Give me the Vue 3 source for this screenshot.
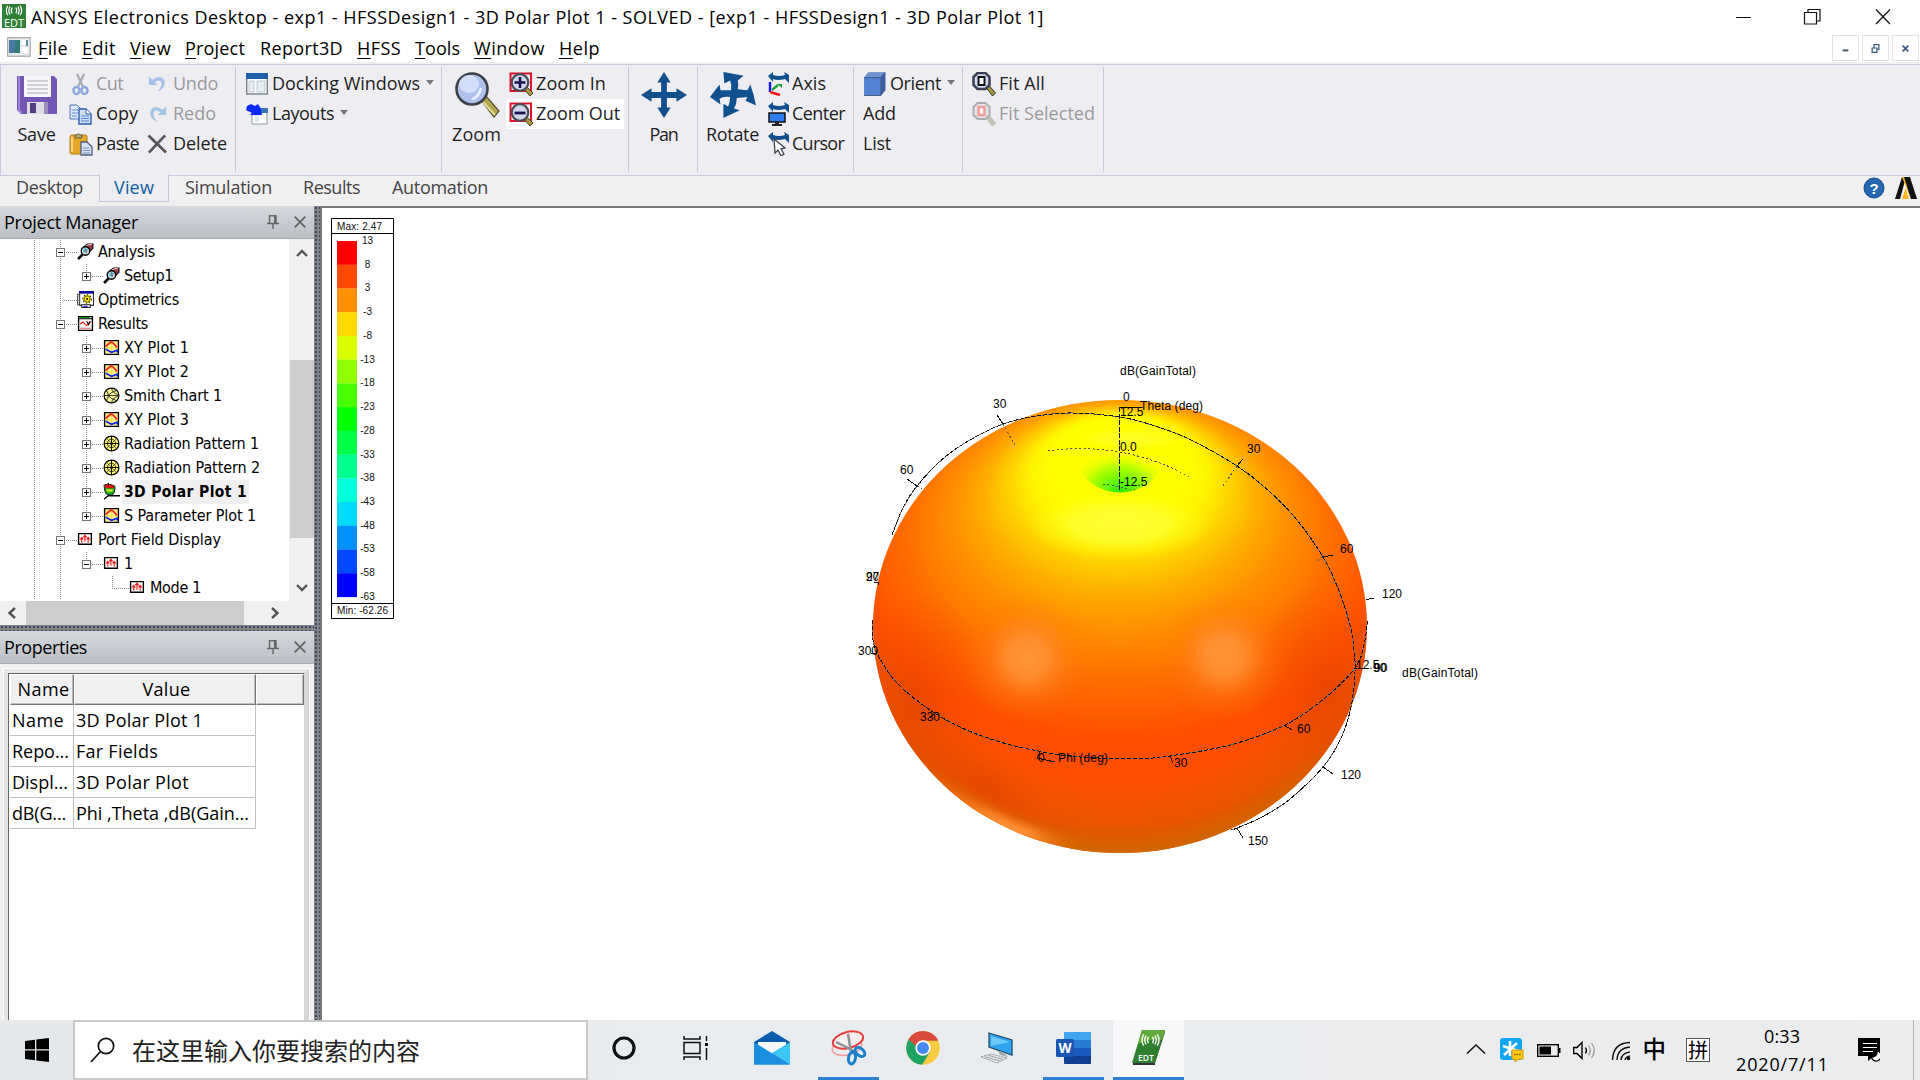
<script setup>
// Spreads a label's letters so that it takes the given width in pixels
const fit = (el, { value }) => {
  if (!value) return
  el.style.letterSpacing = '0px'
  const n = el.textContent.length
  el.style.letterSpacing = (value - el.getBoundingClientRect().width) / n + 'px'
}
const vFit = { mounted: fit }

const menus = [
  ['F', 'ile', 30, 14], ['E', 'dit', 34, 14], ['V', 'iew', 41, 14], ['P', 'roject', 60, 15],
  ['', 'Report3D', 83, 14], ['H', 'FSS', 44, 14], ['T', 'ools', 45, 14], ['W', 'indow', 71, 14], ['H', 'elp', 41, 0],
]

const groups = [
  { w: 235, cols: [
    { big: true, w: 67, icon: 'save', size: 42, label: 'Save', fit: 38, shift: 4 },
    { w: 79, pad: 1, iw: 24, gap: 3, items: [
      { icon: 'cut', label: 'Cut', fit: 27, off: true }, { icon: 'copy', label: 'Copy', fit: 42 }, { icon: 'paste', label: 'Paste', fit: 43 }] },
    { w: 88, pad: 0, iw: 21, gap: 5, items: [
      { icon: 'undo', label: 'Undo', fit: 45, off: true }, { icon: 'redo', label: 'Redo', fit: 43, off: true }, { icon: 'del', label: 'Delete', fit: 54 }] },
  ] },
  { w: 206, cols: [{ w: 205, pad: 10, iw: 22, gap: 4, items: [
    { icon: 'dock', label: 'Docking Windows', fit: 148, arrow: true }, { icon: 'layout', label: 'Layouts', fit: 62, arrow: true }] }] },
  { w: 187, cols: [
    { big: true, w: 64, icon: 'zoom', size: 46, label: 'Zoom', fit: 49, shift: 5 },
    { w: 118, pad: 2, iw: 26, gap: 2, items: [
      { icon: 'zin', label: 'Zoom In', fit: 70 }, { icon: 'zout', label: 'Zoom Out', fit: 84, hot: true }] },
  ] },
  { w: 69, cols: [{ big: true, w: 68, icon: 'pan', size: 48, label: 'Pan', fit: 28, shift: 1 }] },
  { w: 156, cols: [
    { big: true, w: 69, icon: 'rotate', size: 48, label: 'Rotate', fit: 53, shift: 0 },
    { w: 85, pad: 0, iw: 22, gap: 3, items: [
      { icon: 'axis', label: 'Axis', fit: 34 }, { icon: 'center', label: 'Center', fit: 53 }, { icon: 'cursor', label: 'Cursor', fit: 52 }] },
  ] },
  { w: 109, cols: [{ w: 108, pad: 9, iw: 23, gap: 4, items: [
    { icon: 'cube', label: 'Orient', fit: 51, arrow: true }, { label: 'Add', fit: 33 }, { label: 'List', fit: 28 }] }] },
  { w: 141, cols: [{ w: 138, pad: 8, iw: 25, gap: 3, items: [
    { icon: 'fit', label: 'Fit All', fit: 46 }, { icon: 'fitsel', label: 'Fit Selected', fit: 96, off: true }] }] },
]

const tabs = [['Desktop', 67, 16, 16], ['View', 40, 14, 14], ['Simulation', 87, 16, 16], ['Results', 57, 15, 16], ['Automation', 96, 16, 16]]

// g: guide cells left of the icon; l line, + / - boxes, tee stub
const tree = [
  { g: ['l', '-'], icon: 'setup', t: 'Analysis', w: 57 },
  { g: ['l', 'l', '+ last'], icon: 'setup', t: 'Setup1', w: 49 },
  { g: ['l', 'tee'], icon: 'opti', t: 'Optimetrics', w: 81 },
  { g: ['l', '-'], icon: 'results', t: 'Results', w: 50 },
  { g: ['l', 'l', '+'], icon: 'xy', t: 'XY Plot 1', w: 65 },
  { g: ['l', 'l', '+'], icon: 'xy', t: 'XY Plot 2', w: 65 },
  { g: ['l', 'l', '+'], icon: 'smith', t: 'Smith Chart 1', w: 98 },
  { g: ['l', 'l', '+'], icon: 'xy', t: 'XY Plot 3', w: 65 },
  { g: ['l', 'l', '+'], icon: 'rad', t: 'Radiation Pattern 1', w: 135 },
  { g: ['l', 'l', '+'], icon: 'rad', t: 'Radiation Pattern 2', w: 136 },
  { g: ['l', 'l', '+'], icon: 'polar', t: '3D Polar Plot 1', w: 123, sel: true },
  { g: ['l', 'l', '+ last'], icon: 'xy', t: 'S Parameter Plot 1', w: 132 },
  { g: ['l', '-'], icon: 'port', t: 'Port Field Display', w: 123 },
  { g: ['l', 'l', '- last'], icon: 'port', t: '1', w: 0 },
  { g: ['l', 'l', '', 'tee last'], icon: 'port', t: 'Mode 1', w: 51 },
]

const props = [['Name', 52, '3D Polar Plot 1', 127], ['Repo...', 57, 'Far Fields', 82], ['Displ...', 56, '3D Polar Plot', 113], ['dB(G...', 54, 'Phi ,Theta ,dB(Gain...', 173]]

const scale = ['#ff0000', '#ff4800', '#ff9100', '#ffda00', '#daff00', '#91ff00', '#48ff00', '#00ff00', '#00ff48', '#00ff91', '#00ffda', '#00daff', '#0091ff', '#0048ff', '#0000ff']
const ticks = [13, 8, 3, -3, -8, -13, -18, -23, -28, -33, -38, -43, -48, -53, -58, -63]

// Catmull-Rom spline through the points
function smooth(p) {
  let d = `M${p[0]}`
  for (let i = 0; i < p.length - 1; i++) {
    const a = p[i - 1] || p[i], b = p[i], c = p[i + 1], e = p[i + 2] || c
    d += `C${b[0] + (c[0] - a[0]) / 6},${b[1] + (c[1] - a[1]) / 6} ${c[0] - (e[0] - b[0]) / 6},${c[1] - (e[1] - b[1]) / 6} ${c[0]},${c[1]}`
  }
  return d
}
const theta = smooth([[892, 535], [903, 508], [917, 486], [942, 459.500], [970, 440], [1003, 424], [1037, 416], [1073, 413], [1120, 417], [1155, 426], [1190, 439.5], [1237, 466], [1270, 492], [1297, 520], [1323, 557], [1339, 591], [1350, 625], [1354, 650], [1355, 672], [1351, 707], [1341, 738], [1323, 767], [1290, 799], [1262, 817], [1237, 828], [1231, 830]])
const phi = smooth([[873, 620], [873, 640], [879, 657], [897, 683], [927, 708], [960, 727], [1000, 742], [1043, 752], [1080, 757], [1120, 758.5], [1147, 758.3], [1170, 756], [1230, 745], [1285, 725], [1325, 698], [1355, 668], [1364, 645], [1367.5, 621]])
const inner = smooth([[1048, 451], [1080, 448.5], [1120, 452], [1160, 463], [1190, 477]])

const labels = [
  [1120, 375, 'dB(GainTotal)', 76], [1123, 401, '0'], [1140, 410, 'Theta (deg)', 63], [1120, 416, '12.5'], [1120, 451, '0.0'], [1120, 486, '-12.5'],
  [993, 408, '30'], [900, 474, '60'], [1247, 453, '30'], [1340, 553, '60'], [1382, 598, '120'], [858, 655, '300'],
  [920, 721, '330'], [1038, 762, '0'], [1058, 762, 'Phi (deg)', 50], [1174, 767, '30'], [1297, 733, '60'], [1356, 669, '12.5'], [1373, 672, '90'], [1374, 672, '90'],
  [1402, 677, 'dB(GainTotal)', 76], [1341, 779, '120'], [1248, 845, '150'],
]
</script>

<template>
  <svg width="0" height="0" class="defs">
    <symbol id="save" viewBox="0 0 42 42"><path d="M3 2H38L41 5V40H5L1 36V2Z" fill="#7457b5" /><path d="M3 2V36L6 39" stroke="#9d86d2" fill="none" stroke-width="2" /><path d="M8 2H35V23H8Z" fill="#f6f6f8" /><path d="M11 7H32M11 11H32M11 15H32M11 19H32" stroke="#c3c3c8" stroke-width="1.3" /><path d="M11 28H32V40H11Z" fill="#dcdce2" /><path d="M14 29H20V39H14Z" fill="#524080" /><path d="M28 28H32V40H28Z" fill="#9a8cc0" /></symbol>
    <symbol id="cut" viewBox="0 0 24 24"><path d="M8 2L14 15M15 2L9 15" stroke="#a9adb5" stroke-width="2.4" /><g fill="none" stroke="#8fa9de" stroke-width="2.6"><ellipse cx="7.5" cy="18.5" rx="3" ry="3.5" /><ellipse cx="15.5" cy="18.5" rx="3" ry="3.5" /></g></symbol>
    <symbol id="copy" viewBox="0 0 24 24"><path d="M1 3H8L12 7V17H1Z" fill="#dce9fb" stroke="#4a76b8" /><path d="M3 8H9M3 11H9M3 14H8" stroke="#5d8ed0" /><path d="M10 7H17L22 12V22H10Z" fill="#cfe0f8" stroke="#2b5fae" stroke-width="1.4" /><path d="M17 7V12H22" fill="#fff" stroke="#2b5fae" /><path d="M12 14H20M12 16.500H20M12 19H20" stroke="#4f84cf" /></symbol>
    <symbol id="paste" viewBox="0 0 24 24"><rect x="1" y="3" width="17" height="19" rx="1.500" fill="#e6a82a" stroke="#b47f14" /><path d="M3 5V20" stroke="#ffd778" stroke-width="2" /><path d="M6 6V3H8Q9.500 0 11 3H13V6Z" fill="#b8a877" stroke="#6c5f38" /><path d="M12 10H18L23 15V23H12Z" fill="#d6e2f2" stroke="#4c5f80" stroke-width="1.3" /><path d="M14 16H20M14 18.500H21M14 21H21" stroke="#7d95ba" /></symbol>
    <symbol id="undo" viewBox="0 0 22 22"><path d="M2 3V12H11L8 9.500Q13 5.500 15 9Q16.500 13 11 19Q20 15 18.500 8Q15 0 5.500 6.500Z" fill="#a9c0ea" /></symbol>
    <symbol id="redo" viewBox="0 0 22 22"><path d="M20 3V12H11L14 9.500Q9 5.500 7 9Q5.500 13 11 20Q2 15 3.500 8Q7 0 16.500 6.500Z" fill="#a4c4e4" /></symbol>
    <symbol id="del" viewBox="0 0 22 22"><path d="M1.500 2L20 20M19 2L2 20" stroke="#55585c" stroke-width="2.900" /></symbol>
    <symbol id="dock" viewBox="0 0 22 22"><rect x=".7" y="1" width="20.600" height="20" fill="#fff" stroke="#777f88" stroke-width="1.400" /><path d="M0 0H22V6H0Z" fill="#1c62a8" /><path d="M3 8H8V19H3ZM11 8H19V19H11Z" fill="#e6eef3" stroke="#a7b8c0" stroke-width=".7" /></symbol>
    <symbol id="layout" viewBox="0 0 22 22"><path d="M8 6H21V21H6V10Z" fill="#fff" stroke="#8a9aa5" /><path d="M8 5H22V10H8Z" fill="#3776b4" /><path d="M9 12H13V19H9Z" fill="#dce8ef" /><path d="M1 3L5 1L9 3L12 1L15 6L16 12H4L6 10L0 7Z" fill="#0a28ff" /></symbol>
    <symbol id="zoom" viewBox="0 0 46 46"><path d="M27 28L32 24L45 39L40 45Z" fill="#b1a64b" stroke="#555033" stroke-width="1.200" /><path d="M29 30L41 43" stroke="#e1dc94" stroke-width="2" /><ellipse cx="18" cy="17" rx="15.500" ry="15.500" fill="#afc2ed" stroke="#3c4048" stroke-width="2.600" /><ellipse cx="15" cy="12" rx="10" ry="9" fill="#dce6fb" opacity=".8" /><path d="M27 16Q25 25 18 27" stroke="#e9f2ff" stroke-width="2.500" fill="none" /></symbol>
    <symbol id="mag" viewBox="0 0 24 24"><path d="M1.500 1.500H22V19H1.500Z" fill="none" stroke="#e0112b" stroke-width="2" /><path d="M15 17L18 15L24 21L21 24Z" fill="#a69a3d" stroke="#4a4525" /><circle cx="11" cy="10.500" r="8.300" fill="#d0d8ee" stroke="#4b4c54" stroke-width="2.200" /></symbol>
    <symbol id="zin" viewBox="0 0 24 24"><use href="#mag" /><path d="M5.500 10.500H16.500M11 5V16" stroke="#1c1255" stroke-width="2.600" /></symbol>
    <symbol id="zout" viewBox="0 0 24 24"><use href="#mag" /><path d="M5.500 11H16.500" stroke="#1c1255" stroke-width="2.800" /></symbol>
    <symbol id="pan" viewBox="0 0 50 50"><path d="M25 1L32 12H28V22H38V18L49 25L38 32V28H28V38H32L25 49L18 38H22V28H12V32L1 25L12 18V22H22V12H18Z" fill="#11508f" /></symbol>
    <symbol id="rotate" viewBox="0 0 50 50"><path d="M15 1L36 5L30 10Q31 15 30 19L40 20L43 14Q47 25 49 36L38 31L40 27L29 28Q29 34 26 39L32 41L15 49V34L20 37Q22 32 22 27Q15 26 11 29L12 35L1 27L11 14L12 20L23 20Q24 15 22 10L16 13Z" fill="#11508f" /></symbol>
    <symbol id="swing" viewBox="0 0 22 22"><path d="M1 4L6 0V3Q12 5 18 3L17 0L22 3V11L18 7Q11 9 6 7V10Z" fill="#11508f" /></symbol>
    <symbol id="axis" viewBox="0 0 22 24"><use href="#swing" width="22" height="22" /><path d="M3 10V20" stroke="#1512ff" stroke-width="2.400" /><path d="M3 20L13 23" stroke="#f11" stroke-width="2.600" /><path d="M5 18L11 13" stroke="#19a334" stroke-width="2.400" /><path d="M10 12H15V16" fill="#19a334" /></symbol>
    <symbol id="center" viewBox="0 0 22 24"><use href="#swing" width="22" height="22" /><rect x="2" y="11" width="16" height="9" fill="#2d7ff0" stroke="#111" stroke-width="1.500" /><path d="M8 20H12V22H15V24H5V22H8Z" fill="#222" /></symbol>
    <symbol id="cursor" viewBox="0 0 22 24"><use href="#swing" width="22" height="22" /><path d="M7 7L18 16L14 17L17 22L14 24L11 18L8 21Z" fill="#fff" stroke="#3d4350" stroke-width="1.300" /></symbol>
    <symbol id="cube" viewBox="0 0 22 22"><path d="M1 5L5 0H21V17L17 22V5Z" fill="#3c62ad" /><path d="M1 5H17V22H1Z" fill="#5583d3" /><path d="M1 5L5 0H21L17 5Z" fill="#6f92cf" /><path d="M1 5H17L21 0M17 5V22M1 22H17L21 17V0" fill="none" stroke="#35507f" stroke-width=".8" /></symbol>
    <symbol id="fit" viewBox="0 0 24 24"><path d="M15 16L18 14L24 21L21 24Z" fill="#a69a3d" stroke="#333" /><path d="M6 1H14L18 5V13L14 17H6L2 13V5Z" fill="#d3dcf6" stroke="#3d3f52" stroke-width="2.500" /><path d="M7 5H13V13H7Z" fill="#fff" stroke="#111" stroke-width="2" /></symbol>
    <symbol id="fitsel" viewBox="0 0 24 24"><g opacity=".55"><path d="M15 16L18 14L24 21L21 24Z" fill="#aaa583" stroke="#888" /><path d="M6 1H14L18 5V13L14 17H6L2 13V5Z" fill="#dfe3ee" stroke="#777" stroke-width="2" /><path d="M7 5H13V13H7Z" fill="#fff" stroke="#f45a4a" stroke-width="2.500" /></g></symbol>

    <symbol id="setup" viewBox="0 0 16 16"><path d="M1 15L6 10" stroke="#000" stroke-width="2.500" /><path d="M7 3L10 1H15V5L12 8Z" fill="#9c3a4a" stroke="#000" /><path d="M8 3L11 1.500H14" stroke="#e8b4b4" fill="none" /><circle cx="8" cy="7.500" r="4" fill="#c9d7e0" stroke="#000" stroke-width="1.300" /><path d="M6 7L9 9M7 5L10 7" stroke="#18c5d6" stroke-width="1.500" /><path d="M8 6L9 9" stroke="#d33" /></symbol>
    <symbol id="opti" viewBox="0 0 16 16"><path d="M.5 3H5V13H.5Z" fill="#ddd" stroke="#555" /><path d="M2.500 .5H15.500V13.500H2.500Z" fill="#fff" stroke="#333" /><path d="M2 0H16V2.500H2Z" fill="#0a0a9c" /><path d="M4.500 13H12.500V15.500H4.500Z" fill="#fff" stroke="#222" /><circle cx="9.500" cy="7.500" r="4" fill="#fff200" stroke="#222" stroke-dasharray="1.500 1.500" /><circle cx="9.500" cy="7.500" r="2.800" fill="#fff200" stroke="#443f00" stroke-width=".7" /><circle cx="9.500" cy="7.500" r="1" fill="#000" /><path d="M6 14.500H10" stroke="#22f" /></symbol>
    <symbol id="results" viewBox="0 0 16 16"><path d="M1.500 1.500H14.500V14.500H1.500Z" fill="#fff" stroke="#000" stroke-width="1.300" /><path d="M1 3.500H15" stroke="#000" /><path d="M3 2.300H12" stroke="#090" /><path d="M3 9Q5 5 7 8T10 9L13 6" stroke="#e00" fill="none" /><path d="M9 6L11 9L12 6" stroke="#000" fill="none" /><path d="M3 12.500H13" stroke="#e66" /></symbol>
    <symbol id="xy" viewBox="0 0 16 16"><path d="M1.500 1.500H14.500V14.500H1.500Z" fill="#fff6a0" stroke="#000" stroke-width="1.300" /><path d="M4 4H12V12H4ZM2 8H14M8 3V13" stroke="#f0e13a" fill="none" /><path d="M2.500 7L8 2.500L13.500 8" stroke="#f01818" stroke-width="1.500" fill="none" /><path d="M2.500 9.500L8 12.500L13.500 10.500V13" stroke="#1122ee" stroke-width="1.500" fill="none" /></symbol>
    <symbol id="smith" viewBox="0 0 16 16"><circle cx="8" cy="8" r="7" fill="#fbf99a" stroke="#000" stroke-width="1.100" /><path d="M1 8H15M3 3Q7 8 3 13M13 3Q6 6 5 8Q7 11 13 13M8 1Q9 6 14 7M8 15Q9 10 14 9" stroke="#111" fill="none" stroke-width=".8" /></symbol>
    <symbol id="rad" viewBox="0 0 16 16"><circle cx="8" cy="8" r="7" fill="#fbf97a" stroke="#000" stroke-width="1.100" /><circle cx="8" cy="8" r="3.800" fill="none" stroke="#000" stroke-width=".7" /><path d="M1 8H15M8 1V15" stroke="#111" /><path d="M3 3L13 13M13 3L3 13" stroke="#111" stroke-width=".5" /></symbol>
    <symbol id="polar" viewBox="0 0 16 16"><path d="M5 10V12L1 15M5 12H16" stroke="#000" stroke-width="1.300" fill="none" /><path d="M1 2Q6 0 11 3Q12 8 9 11Q6 12 3 10Q1 7 1 2Z" fill="#1db81d" stroke="#222" /><path d="M1.500 2Q6 0 10.500 3L10 5H2Z" fill="#d11313" /><path d="M3 6H9V8H4Z" fill="#f5e628" /><path d="M5 -1V2" stroke="#000" /></symbol>
    <symbol id="port" viewBox="0 0 16 16"><path d="M1.500 2.500H13.500V12.500H1.500Z" fill="#fff" stroke="#000" stroke-width="1.300" /><path d="M4.500 11V7M7.500 10V5M10.500 11V7M3 8L4.500 6L6 8M6 6L7.500 4L9 6M9 8L10.500 6L12 8" stroke="#e80c0c" fill="none" /></symbol>
    <symbol id="pin" viewBox="0 0 12 14"><path d="M2.500 8V.7H9V8M0 8.500H12M6 9V14" stroke="#666" stroke-width="1.400" fill="none" /><path d="M7 1H9V8H7Z" fill="#666" /></symbol>
    <symbol id="x" viewBox="0 0 12 12"><path d="M.7 .7L11.300 11.300M11.300 .7L.7 11.300" stroke="#666" stroke-width="1.800" /></symbol>
    <symbol id="waves" viewBox="0 0 24 14"><g fill="none" stroke="#fff" stroke-width="1.700"><path d="M9.500 3Q7 7 9.500 11M6.500 1.500Q3 7 6.500 12.500M3.500 0Q-1 7 3.500 14" /><path d="M14.500 3Q17 7 14.500 11M17.500 1.500Q21 7 17.500 12.500M20.500 0Q25 7 20.500 14" /></g></symbol>
  </svg>

  <div class="desktop">
    <header class="title">
      <svg class="app" viewBox="0 0 24 24"><rect width="24" height="24" fill="#2f7f35" /><use href="#waves" x="3" y="1.500" width="18" height="10" /><text x="12" y="22.500" text-anchor="middle" font-size="11" fill="#fff" font-family="Open Sans">EDT</text></svg>
      <span v-fit="1013" class="ttext">ANSYS Electronics Desktop - exp1 - HFSSDesign1 - 3D Polar Plot 1 - SOLVED - [exp1 - HFSSDesign1 - 3D Polar Plot 1]</span>
      <svg class="wctl" width="170" height="32" viewBox="0 0 170 32" fill="none" stroke="#111" stroke-width="1.200"><path d="M7 17.500H22M75.500 12.500H87.500V24H75.500ZM79 12V9.500H91V21H88M147 9.500L161 24M161 9.500L147 24" /></svg>
    </header>
    <nav class="menu">
      <svg class="doc" width="24" height="20" viewBox="0 0 24 20"><rect x=".7" y=".7" width="22.500" height="18.500" fill="#e8eaec" stroke="#93999e" /><path d="M2 3H13V16H2Z" fill="#2f7f78" /><path d="M2 3H8V16H2Z" fill="#4a78a5" /><path d="M15 3H21V8H15ZM15 10H21V16H15Z" fill="#fff" /><path d="M19 3H21V9H19Z" fill="#5a8d9c" /></svg>
      <span v-for="m in menus" :key="m[1]" v-fit="m[2]" :style="{ marginRight: m[3] + 'px' }"><u v-if="m[0]">{{ m[0] }}</u>{{ m[1] }}</span>
      <div class="mdi">
        <svg viewBox="0 0 26 25"><path d="M10 15H16" stroke="#456" stroke-width="2" /></svg>
        <svg viewBox="0 0 26 25"><path d="M9.500 12.500H14.500V17H9.500ZM11.500 12V9H16.500V14H15" stroke="#3d5a80" stroke-width="1.300" fill="none" /></svg>
        <svg viewBox="0 0 26 25"><path d="M10 10L16 16M16 10L10 16" stroke="#3d5a80" stroke-width="1.800" /></svg>
      </div>
    </nav>

    <section class="ribbon">
      <div v-for="(g, i) in groups" :key="i" class="group" :style="{ width: g.w + 'px' }">
        <div v-for="(c, j) in g.cols" :key="j" :class="c.big ? 'big' : 'col'" :style="{ width: c.w + 'px', paddingLeft: (c.big ? c.shift : 0) + 'px' }">
          <template v-if="c.big">
            <span class="bicon"><svg :width="c.size" :height="c.size"><use :href="'#' + c.icon" /></svg></span>
            <span v-fit="c.fit">{{ c.label }}</span>
          </template>
          <template v-else>
            <div v-for="b in c.items" :key="b.label" class="btn" :class="{ off: b.off, hot: b.hot }" :style="{ paddingLeft: c.pad + 'px', gap: c.gap + 'px' }">
              <svg v-if="b.icon" :width="c.iw" height="24"><use :href="'#' + b.icon" /></svg>
              <span v-fit="b.fit">{{ b.label }}</span>
              <i v-if="b.arrow" class="arrow"></i>
            </div>
          </template>
        </div>
      </div>
    </section>
    <nav class="tabs">
      <span v-for="(t, i) in tabs" :key="t[0]" class="tab" :class="{ on: i === 1 }" :style="{ paddingLeft: t[2] + 'px', paddingRight: t[3] + 'px' }"><b v-fit="t[1]">{{ t[0] }}</b></span>
      <svg class="help" width="54" height="26" viewBox="0 0 54 26"><circle cx="11" cy="13" r="10" fill="#2467b2" stroke="#1a4c8a" /><text x="11" y="18.500" text-anchor="middle" font-family="Liberation Sans" font-weight="bold" font-size="15" fill="#fff">?</text><path d="M39 2H43L37 24H32Z" fill="#111" /><path d="M39 2H46L54 24H48Z" fill="#ffb71b" /><path d="M41 2H47L54 24H48Z" fill="#111" /><path d="M42.500 13L46 24H39Z" fill="#ffb71b" /></svg>
    </nav>

    <main class="work">
      <aside class="side">
        <div class="ph"><span v-fit="134">Project Manager</span><svg width="12" height="14"><use href="#pin" /></svg><svg width="12" height="12"><use href="#x" /></svg></div>
        <div class="treewrap">
          <div class="tree">
            <div v-for="(r, i) in tree" :key="i" class="row">
              <span v-for="(g, j) in r.g" :key="j" class="cell" :class="{ line: g === 'l', node: g && g !== 'l', last: g.includes('last') }"><i v-if="/^[+-]/.test(g)" class="box" :class="{ plus: g[0] === '+' }"></i></span>
              <svg width="17" height="17"><use :href="'#' + r.icon" /></svg>
              <span class="name" :class="{ sel: r.sel }"><b v-fit="r.w">{{ r.t }}</b></span>
            </div>
          </div>
          <div class="vbar">
            <svg width="12" height="8" viewBox="0 0 12 8"><path d="M1 7L6 2L11 7" fill="none" stroke="#555" stroke-width="2.400" /></svg>
            <div class="vthumb"></div>
            <svg width="12" height="8" viewBox="0 0 12 8"><path d="M1 1L6 6L11 1" fill="none" stroke="#555" stroke-width="2.400" /></svg>
          </div>
        </div>
        <div class="hbar">
          <svg width="10" height="12" viewBox="0 0 10 12"><path d="M8 1L2.500 6L8 11" fill="none" stroke="#555" stroke-width="2.400" /></svg>
          <div class="hthumb"></div>
          <svg width="10" height="12" viewBox="0 0 10 12"><path d="M2 1L7.500 6L2 11" fill="none" stroke="#555" stroke-width="2.400" /></svg>
        </div>
        <div class="split hs"></div>
        <div class="ph"><span v-fit="83">Properties</span><svg width="12" height="14"><use href="#pin" /></svg><svg width="12" height="12"><use href="#x" /></svg></div>
        <div class="pbody">
          <div class="pframe">
            <div class="prow phead"><span><b v-fit="52">Name</b></span><span><b v-fit="48">Value</b></span><span></span></div>
            <div v-for="p in props" :key="p[0]" class="prow"><span><b v-fit="p[1]">{{ p[0] }}</b></span><span><b v-fit="p[3]">{{ p[2] }}</b></span></div>
          </div>
        </div>
      </aside>
      <div class="split vs"></div>
      <div class="client">
        <svg width="1598" height="812" viewBox="322 208 1598 812">
          <defs>
            <radialGradient id="gbase" gradientUnits="userSpaceOnUse" cx="0" cy="0" r="1" fx="0" fy="-.71" gradientTransform="translate(1120 560) scale(262 180)">
              <stop offset="0" stop-color="#ffff00" /><stop offset=".25" stop-color="#ffff00" /><stop offset=".33" stop-color="#fff600" /><stop offset=".42" stop-color="#ffd400" /><stop offset=".52" stop-color="#ffae00" /><stop offset=".64" stop-color="#ff9000" /><stop offset=".8" stop-color="#ff7000" /><stop offset="1" stop-color="#ff4e00" />
            </radialGradient>
            <radialGradient id="ggreen" gradientUnits="userSpaceOnUse" cx="0" cy="0" r="1" gradientTransform="translate(1120 492) scale(52 42)"><stop offset="0" stop-color="#28ec00" /><stop offset=".3" stop-color="#6cf800" /><stop offset=".6" stop-color="#a8ff00" stop-opacity=".9" /><stop offset="1" stop-color="#ffff00" stop-opacity="0" /></radialGradient>
            <radialGradient id="gspot"><stop offset="0" stop-color="#ff9838" /><stop offset=".3" stop-color="#ff9236" stop-opacity=".85" /><stop offset=".65" stop-color="#ff8020" stop-opacity=".3" /><stop offset="1" stop-color="#ff7010" stop-opacity="0" /></radialGradient>
            <radialGradient id="glow"><stop offset="0" stop-color="#ffff38" /><stop offset=".5" stop-color="#ffff30" stop-opacity=".8" /><stop offset="1" stop-color="#ffff00" stop-opacity="0" /></radialGradient>
            <radialGradient id="gedge" gradientUnits="userSpaceOnUse" cx="0" cy="0" r="1" gradientTransform="translate(1120 480) scale(330 374)"><stop offset=".8" stop-color="#c86400" stop-opacity="0" /><stop offset=".93" stop-color="#cf5a00" stop-opacity=".5" /><stop offset="1" stop-color="#cd6800" stop-opacity="1" /></radialGradient>
            <radialGradient id="gside"><stop offset="0" stop-color="#e04000" stop-opacity=".6" /><stop offset="1" stop-color="#f04400" stop-opacity="0" /></radialGradient>
            <linearGradient id="gstreak" gradientUnits="userSpaceOnUse" x1="915" y1="770" x2="1080" y2="850"><stop offset="0" stop-color="#ff7018" stop-opacity="0" /><stop offset=".5" stop-color="#ff8c30" /><stop offset=".7" stop-color="#ff9030" /><stop offset="1" stop-color="#f07010" stop-opacity="0" /></linearGradient>
            <filter id="b5" x="-30%" y="-30%" width="160%" height="160%"><feGaussianBlur stdDeviation="4" /></filter>
            <clipPath id="body"><ellipse cx="1120" cy="626.500" rx="247" ry="226.500" /></clipPath>
            <clipPath id="bowl"><path d="M1060 440H1180V462H1168Q1148 492.500 1120 492.500Q1092 492.500 1072 462H1060Z" /></clipPath>
            <clipPath id="behind"><path d="M850 560H880L877 590H850Z" /></clipPath>
          </defs>
          <g clip-path="url(#body)">
            <rect x="870" y="398" width="500" height="458" fill="url(#gbase)" />
            <ellipse cx="1120" cy="524" rx="95" ry="36" fill="url(#glow)" />
            <ellipse cx="1130" cy="439" rx="60" ry="12" fill="url(#glow)" opacity=".7" />
            <rect x="870" y="398" width="500" height="460" fill="url(#gedge)" />
            <ellipse cx="915" cy="700" rx="75" ry="110" fill="url(#gside)" />
            <ellipse cx="1325" cy="690" rx="75" ry="110" fill="url(#gside)" />
            <ellipse cx="985" cy="785" rx="100" ry="35" transform="rotate(32 985 785)" fill="url(#gside)" />
            <circle cx="1027" cy="658" r="64" fill="url(#gspot)" /><circle cx="1224" cy="656" r="64" fill="url(#gspot)" />
            <path d="M915 758Q985 822 1085 842L1080 862Q985 848 905 780Z" fill="url(#gstreak)" filter="url(#b5)" />
          </g>
          <rect x="1060" y="440" width="120" height="54" fill="url(#ggreen)" clip-path="url(#bowl)" />
          <g fill="none" stroke="#111" stroke-width="1" shape-rendering="crispEdges">
            <path :d="theta" stroke="#777" /><path :d="theta" stroke-dasharray="4 2" />
            <path :d="phi" stroke="#777" /><path :d="phi" stroke-dasharray="4 2" />
            <g stroke="#555" stroke-dasharray="2 2.500"><path :d="inner" /><path d="M1103 484L1120 487L1135 490M1003 424L1016 447M917 486L922 489M1237 466L1223 486M1323 557L1317 561M1323 767L1319 764" /></g>
            <path d="M1119.500 407V492" stroke="#111" stroke-dasharray="5 1.500" />
            <path d="M997 415L1003 424M907 479L917 486M1237 466L1243 459M1323 557L1333 555M1366 599.500L1374 598M1323 767L1333 774M1237 828L1243 838M1284 725L1292 730M1170 756L1173 763M1040 752L1037 758L1055 762M1355 668.500H1366M871 653H877M874 582H878V585M1119 407.500H1140M928 719L934 714" />
          </g>
          <g font-family="Liberation Sans, sans-serif" font-size="12" fill="#000">
            <text v-for="(l, i) in labels" :key="i" :x="l[0]" :y="l[1]" :textLength="l[3]">{{ l[2] }}</text>
            <g clip-path="url(#behind)"><text x="866" y="581">90</text><text x="866" y="581">270</text></g>
          </g>
          <g font-family="Liberation Sans, sans-serif" font-size="10" fill="#111">
            <path d="M331.500 218.500H393.500V618.500H331.500ZM331.500 233.500H393.500M331.500 603.500H393.500" fill="none" stroke="#000" />
            <text x="337" y="230" textLength="45">Max: 2.47</text><text x="337" y="614" textLength="51">Min: -62.26</text>
            <rect v-for="(c, i) in scale" :key="c" x="337" :y="241 + i * 23.73" width="20" height="23.900" :fill="c" />
            <text v-for="(t, i) in ticks" :key="t" x="367.500" :y="244 + i * 23.73" text-anchor="middle">{{ t }}</text>
          </g>
        </svg>
      </div>
    </main>

    <footer class="bar">
      <div class="start"><svg width="24" height="24" viewBox="0 0 24 24"><path d="M0 3L10 1.700V11.300H0ZM11.300 1.500L24 0V11.300H11.300ZM0 12.600H10V22.200L0 21ZM11.300 12.600H24V24L11.300 22.400Z" /></svg></div>
      <div class="search"><svg width="25" height="26" viewBox="0 0 25 26" fill="none" stroke="#111" stroke-width="1.700"><circle cx="16" cy="9" r="7.700" /><path d="M10.500 14.500L1 25" /></svg><span>在这里输入你要搜索的内容</span></div>
      <div class="app w1"><svg width="26" height="26" viewBox="0 0 26 26"><circle cx="13" cy="13" r="10" fill="none" stroke="#111" stroke-width="3.200" /></svg></div>
      <div class="app w2"><svg width="26" height="26" viewBox="0 0 26 26" fill="none" stroke="#111" stroke-width="1.500"><path d="M1 1V4H17V1M1 7.500H17V18.500H1ZM1 25V22H17V25M23.500 1V6M23.500 13V25" /><path d="M22 8H25V11H22Z" fill="#111" stroke="none" /></svg></div>
      <div class="app w3"><svg width="36" height="34" viewBox="0 0 36 34"><path d="M0 11L18 0L36 11V14H0Z" fill="#0b5cad" /><path d="M4 11H32V20L18 25L4 18Z" fill="#fff" /><path d="M0 11L36 33.500H0Z" fill="#1a8fe0" /><path d="M36 11L18 22L36 33.500Z" fill="#3cc5f5" /><path d="M4 11H32L18 21.500Z" fill="#f4f6f8" /><path d="M0 33.500H36L18 22Z" fill="#1e8ee0" /></svg></div>
      <div class="app run w4"><svg width="36" height="36" viewBox="0 0 36 36" fill="none"><ellipse cx="16" cy="17" rx="15" ry="8" transform="rotate(-12 16 17)" stroke="#f29a9a" stroke-width="1.500" /><ellipse cx="17" cy="10" rx="15.500" ry="8" transform="rotate(-14 17 10)" fill="#f6eeee" stroke="#e83b3b" stroke-width="2" /><path d="M5 12L23 21M17 4L20 22" stroke="#8b9096" stroke-width="2.500" /><ellipse cx="21" cy="28" rx="3.500" ry="6" transform="rotate(10 21 28)" stroke="#1580cc" stroke-width="3" /><ellipse cx="29" cy="22" rx="5.500" ry="3.500" transform="rotate(40 29 22)" stroke="#1580cc" stroke-width="3" /></svg></div>
      <div class="app w5"><svg width="34" height="34" viewBox="0 0 34 34"><circle cx="17" cy="17" r="16.800" fill="#f9cb42" /><path d="M17 17L2.500 8.500A16.800 16.800 0 0 1 32 9.500H17Z" fill="#d94a3d" /><path d="M2.500 8.500A16.800 16.800 0 0 0 16 33.800L24 21L17 17Z" fill="#1ea362" /><path d="M2.500 8.500L10 21L17 17L12 9Z" fill="#1ea362" /><path d="M2.500 8.500A16.800 16.800 0 0 1 32 9.500H17Q11 10 10 15Z" fill="#d94a3d" /><circle cx="17" cy="17" r="7.700" fill="#fff" /><circle cx="17" cy="17" r="6" fill="#4688f1" /></svg></div>
      <div class="app w6"><svg width="34" height="32" viewBox="0 0 34 32"><path d="M9 1L32 8V23L9 15Z" fill="#2fa2f0" stroke="#234d6c" stroke-width="1.300" /><path d="M11 4L30 10L11 14Z" fill="#6cc7fb" /><path d="M18 19L23 20L28 25L20 23Z" fill="#a5a9ae" /><path d="M1 25L11 22L27 26L17 31Z" fill="#e4e6e8" stroke="#8e9297" stroke-dasharray="2 1" /><path d="M5 25L20 29M9 23.500L23 27.500" stroke="#9da1a6" /></svg></div>
      <div class="app run w7"><svg width="36" height="34" viewBox="0 0 36 34"><rect x="8" y="1" width="27" height="32" rx="1.500" fill="#2a7cd3" /><path d="M8 2.500Q8 1 9.500 1H33.500Q35 1 35 2.500V9H8Z" fill="#41a5ee" /><path d="M8 17H35V25H8Z" fill="#185abd" /><path d="M8 25H35V31.500Q35 33 33.500 33H9.500Q8 33 8 31.500Z" fill="#103f91" /><rect y="8" width="18" height="18" rx="1.500" fill="#1c56b3" /><text x="9" y="22" text-anchor="middle" font-family="Open Sans" font-weight="bold" font-size="13.500" fill="#fff">W</text></svg></div>
      <div class="app run act"><svg width="34" height="36" viewBox="0 0 34 36"><path d="M1 33H23L33 2L32 0Z" fill="#333" /><path d="M1 35V33H23V35Z" fill="#333" /><path d="M10 0H33L23 33H0Z" fill="#2e8030" /><path d="M10 0H33L30 10Q18 8 6 14Z" fill="#62ab3a" /><use href="#waves" x="9" y="3" width="19" height="14" /><text x="14" y="30.500" text-anchor="middle" font-family="Open Sans" font-weight="600" font-size="8.500" fill="#fff">EDT</text></svg></div>
      <div class="tray">
        <svg width="420" height="60" viewBox="1460 1020 420 60">
          <path d="M1467 1053.500L1476 1045L1485 1053.500" fill="none" stroke="#111" stroke-width="1.500" />
          <rect x="1500" y="1038" width="22" height="22" rx="3" fill="#13a5f5" /><path d="M1510 1041V1056M1503 1046L1518 1051M1517 1043L1504 1055" stroke="#fff" stroke-width="2.600" /><path d="M1512 1050H1523V1059H1519L1515 1062V1059H1512Z" fill="#ffc814" stroke="#d99a00" /><path d="M1514 1054.500H1521" stroke="#865c00" stroke-width="1.500" stroke-dasharray="1.500 1" />
          <rect x="1537.700" y="1044.700" width="20.600" height="11.600" fill="none" stroke="#000" stroke-width="1.400" /><path d="M1539.500 1046.500H1551V1054.500H1539.500ZM1559 1048H1560.500V1053H1559Z" />
          <path d="M1573.700 1047.500H1577L1582 1042.500V1058.500L1577 1053.500H1573.700Z" fill="none" stroke="#000" stroke-width="1.400" /><path d="M1585.500 1047.500Q1587.500 1050.500 1585.500 1053.500" fill="none" stroke="#000" stroke-width="1.300" /><path d="M1588.500 1045.500Q1592 1050.500 1588.500 1055.500M1591.500 1043Q1597 1050.500 1591.500 1058" fill="none" stroke="#999" stroke-width="1.200" />
          <g fill="none" stroke="#111" stroke-width="1.400"><path d="M1612.500 1060Q1613 1043 1630 1042.500M1617 1060Q1617.500 1048 1630 1047M1621 1060Q1621.500 1053 1630 1052M1625 1060Q1625.500 1057 1630 1056" /></g><circle cx="1628.500" cy="1058.500" r="1.700" />
          <g font-family="Noto Sans CJK SC, sans-serif"><text x="1642.500" y="1058" font-size="23.500" font-weight="500">中</text><rect x="1686.500" y="1038.500" width="23" height="23" fill="#fff" stroke="#555" /><text x="1688" y="1057.500" font-size="20">拼</text></g>
          <g font-family="Open Sans, sans-serif" font-size="18"><text x="1764" y="1043" textLength="36">0:33</text><text x="1736" y="1071" textLength="92">2020/7/11</text></g>
          <path d="M1858 1038H1882V1056H1874L1868 1061V1056H1858Z" /><path d="M1863 1043.500H1877M1863 1047.500H1877M1863 1051.500H1873" stroke="#fff" /><path d="M1877 1050.500Q1878 1056 1871.500 1057.500Q1873 1061.500 1877.500 1061Q1882 1059 1881 1054Q1879.500 1051 1877 1050.500Z" fill="#fff" stroke="#000" stroke-width="1.200" />
        </svg>
        <i></i>
      </div>
    </footer>
  </div>
</template>

<style>
html, body { margin: 0; overflow: hidden; }
</style>
<style scoped>
.defs { display: block; height: 0; position: absolute; }
.desktop { width: 1920px; height: 1080px; background: #fff; display: flex; flex-direction: column; font: 18px/24px "Open Sans", "Noto Sans CJK SC", sans-serif; color: #000; white-space: nowrap; overflow: hidden; }
.desktop svg { display: block; flex: none; }
b { font-weight: inherit; }
span, b { display: inline-block; flex: none; }
.title { height: 33px; display: flex; align-items: center; padding-left: 2px; }
.title .app { width: 24px; height: 24px; margin-right: 5px; }
.ttext { margin-top: 2px; }
.wctl { margin-left: auto; margin-right: 21px; }
.menu { height: 29px; display: flex; align-items: center; padding-left: 7px; }
.doc { margin-right: 7px; }
.menu span { margin-top: 2px; }
.menu u { text-underline-offset: 3px; text-decoration-thickness: 1px; }
.mdi { margin: 2px 0 0 auto; display: flex; gap: 3px; padding-right: 1px; }
.mdi svg { width: 25px; height: 24px; border: 1px solid #e3e3e3; }
.ribbon { height: 109px; border: 1px solid #c8c8de; border-right: 0; background: #eeeef2; box-shadow: 0 -2px #f0f0f0; margin-top: 2px; display: flex; padding-top: 2px; color: #1e1e1e; }
.group { height: 105px; border-right: 1px solid #c8c8de; display: flex; box-sizing: border-box; }
.big { display: flex; flex-direction: column; align-items: center; box-sizing: border-box; padding-top: 1px; }
.bicon { height: 54px; display: flex; align-items: center; }
.col { padding-top: 2px; }
.btn { height: 30px; display: flex; align-items: center; box-sizing: border-box; }
.btn span { margin-top: -2px; }
.btn.off { color: #9a9a9d; }
.btn.hot { background: #fff; }
.arrow { border: 4px solid transparent; border-top: 5px solid #777; border-bottom: 0; margin-left: 2px; margin-top: -2px; }
.tabs { height: 30px; background: #f0f0f0; display: flex; align-items: flex-start; color: #444; }
.tab { height: 26px; line-height: 22px; }
.tab.on { background: #eeeef2; color: #0e5fa5; border: 1px solid #c8c8de; border-top: 0; height: 28px; margin-top: -2px; line-height: 26px; box-sizing: border-box; }
.help { margin: -1px 3px 0 auto; }
.work { display: flex; height: 814px; }
.side { width: 314px; display: flex; flex-direction: column; background: #f0f0f0; }
.ph { height: 33px; flex: none; background: linear-gradient(#d5d9de, #bcc0c6); border-bottom: 1px solid #a9abad; display: flex; align-items: center; padding: 0 8px 0 4px; gap: 15px; box-sizing: border-box; }
.ph span { margin-right: auto; margin-top: 1px; }
.treewrap { display: flex; height: 362px; background: #fff; }
.tree { width: 289px; overflow: hidden; padding-left: 21px; box-sizing: border-box; font: 16px/20px "DejaVu Sans Condensed", "Noto Sans", sans-serif; }
.row { height: 24px; display: flex; align-items: center; position: relative; top: 1px; }
.row > svg { margin: 0 2px 0 4px; }
.cell { width: 26px; height: 24px; position: relative; }
.cell.line, .cell.node:not(.last) { background: repeating-linear-gradient(#888 0 1px, transparent 1px 2px) 13px 0 / 1px 100% no-repeat; }
.cell.last { background: repeating-linear-gradient(#888 0 1px, transparent 1px 2px) 13px 0 / 1px 12px no-repeat; }
.cell.node::after { content: ""; position: absolute; left: 13px; top: 12px; width: 17px; height: 1px; background: repeating-linear-gradient(90deg, #888 0 1px, transparent 1px 2px); }
.box { position: absolute; z-index: 1; left: 9px; top: 8px; width: 7px; height: 7px; border: 1px solid #777; background: linear-gradient(#000, #000) center / 5px 1px no-repeat, #fff; }
.box.plus { background: linear-gradient(#000, #000) center / 5px 1px no-repeat, linear-gradient(#000, #000) center / 1px 5px no-repeat, #fff; }
.name { padding: 2px 2px 2px 2px; }
.name.sel { background: #efefef; font-weight: bold; font-size: 15.500px; }
.vbar { width: 25px; background: #f0f0f0; display: flex; flex-direction: column; align-items: center; padding-top: 10px; box-sizing: border-box; }
.vthumb { width: 24px; height: 178px; background: #cdcdcd; margin: 103px 0 46px; flex: none; }
.hbar { height: 24px; background: #f0f0f0; display: flex; align-items: center; padding-left: 7px; }
.hthumb { width: 218px; height: 24px; background: #cdcdcd; margin: 0 26px 0 9px; }
.split { background: radial-gradient(circle, #34476e 0 1px, transparent 1.200px) 0 0 / 4px 4px, #848484; }
.hs { height: 6px; flex: none; }
.vs { width: 6px; border-right: 2px solid #777; }
.pbody { flex: 1; padding: 5px 4px 0; display: flex; }
.pframe { flex: 1; border: solid; border-width: 4px 5px 0 4px; border-color: #e6e6e6 #d5d5d5 #fff #e3e3e3; background: #fff; outline: 1px solid #fff; box-shadow: inset 1px 1px #666, 1px 0 #666; padding: 1px 0 0 2px; margin-right: 1px; overflow: hidden; }
.prow { display: flex; height: 31px; }
.prow span { box-sizing: border-box; border: solid #c0c0c0; border-width: 0 1px 1px 0; line-height: 30px; padding-left: 2px; }
.prow span:nth-child(1) { width: 64px; }
.prow span:nth-child(2) { width: 182px; }
.phead span { background: #f0f0f0; border: 1px solid #fff; border-right-color: #777; border-bottom-color: #777; text-align: center; padding: 0 0 0 3px; box-shadow: inset -1px -1px #bbb; line-height: 28px; }
.phead span:nth-child(3) { flex: 1; }
.client { flex: 1; border-top: 2px solid #777; background: #fff; overflow: hidden; }
.bar { height: 60px; background: linear-gradient(90deg, #e5e8eb, #eaedf0 40%, #e9ebed 70%, #ebedee); display: flex; }
.start { width: 73px; flex: none; display: flex; align-items: center; justify-content: center; }
.search { width: 515px; flex: none; box-sizing: border-box; border: 2px solid #c9c9c9; background: #fff; display: flex; align-items: center; padding-left: 15px; gap: 17px; font: 24px/36px "Noto Sans CJK SC", sans-serif; color: #222; }
.bar .app { display: flex; flex: none; align-items: center; justify-content: center; box-sizing: border-box; border-bottom: 3px solid transparent; }
.bar .run { border-bottom-color: #2b80cf; }
.w1 { width: 72px; }
.w2 { width: 72px; }
.w3 { width: 80px; }
.w4 { width: 61px; margin-left: 6px; }
.w5 { width: 74px; margin-left: 7px; }
.w6 { width: 74px; }
.w7 { width: 61px; margin-left: 9px; }
.act { width: 71px; margin-left: 9px; background: #f7f8f9; }
.tray { margin-left: auto; width: 460px; display: flex; justify-content: space-between; }
.tray i { width: 6px; border-left: 1px solid #b5b5b5; }
</style>
